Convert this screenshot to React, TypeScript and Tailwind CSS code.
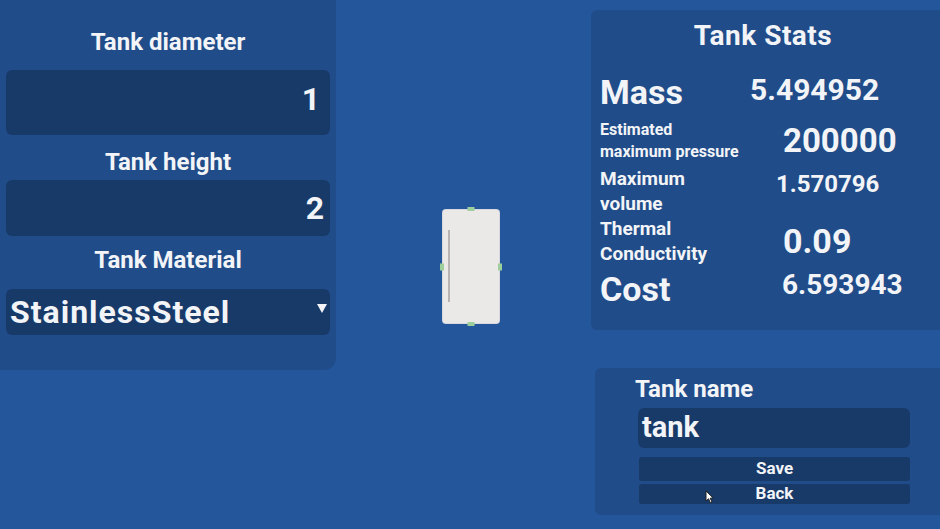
const font = { fontFamily: 'Roboto, "Noto Sans", sans-serif' };

type Stat = {
  label: string[];
  labelClass: string;
  value: string;
  valueClass: string;
  rowClass: string;
};

const stats: Stat[] = [
  { label: ['Mass'], labelClass: 'text-[34px] leading-[36px]', value: '5.494952', valueClass: 'ml-0 text-[30px] -mt-[6px]', rowClass: 'h-[48px]' },
  { label: ['Estimated', 'maximum pressure'], labelClass: 'text-[16px] leading-[22px]', value: '200000', valueClass: 'ml-[33px] text-[33px]', rowClass: 'h-[50px]' },
  { label: ['Maximum', 'volume'], labelClass: 'text-[19px] leading-[25px]', value: '1.570796', valueClass: 'ml-[26px] text-[24px] -mt-[14px]', rowClass: 'h-[50px]' },
  { label: ['Thermal', 'Conductivity'], labelClass: 'text-[19px] leading-[25px]', value: '0.09', valueClass: 'ml-[33px] text-[34px]', rowClass: 'h-[50px]' },
  { label: ['Cost'], labelClass: 'text-[34px] leading-[36px]', value: '6.593943', valueClass: 'ml-[32px] text-[28px] -mt-[8px]', rowClass: 'h-[46px]' },
];

function TankPreview() {
  return (
    <div className="relative w-[56px] h-[113px] rounded-[3px] bg-[#ebe8e8] shadow-[0_0_0_1px_#d8d8e0]">
      <div className="absolute left-[5px] top-[20px] w-[2px] h-[72px] bg-[#b9b3b3]" />
      {/* resize handles */}
      <div className="absolute left-1/2 -translate-x-1/2 -top-[3px] w-[7px] h-[4px] bg-[#9ccf9c]" />
      <div className="absolute left-1/2 -translate-x-1/2 -bottom-[3px] w-[7px] h-[4px] bg-[#9ccf9c]" />
      <div className="absolute top-1/2 -translate-y-1/2 -left-[3px] w-[4px] h-[7px] bg-[#9ccf9c]" />
      <div className="absolute top-1/2 -translate-y-1/2 -right-[3px] w-[4px] h-[7px] bg-[#9ccf9c]" />
    </div>
  );
}

export default function App() {
  return (
    <div
      className="relative flex w-[940px] h-[529px] overflow-hidden bg-[#24569c] text-[#f2f4f7] font-bold"
      style={font}
    >
      {/* Tank settings */}
      <div className="flex flex-col w-[336px] h-[370px] shrink-0 px-[6px] bg-[#204c89] rounded-br-[12px]">
        <div className="mt-[20px] h-[44px] flex items-center justify-center text-[24px]">Tank diameter</div>
        <div className="mt-[6px] h-[65px] rounded-[6px] bg-[#183a69] flex items-center justify-end pr-[10px] pb-[8px] text-[32px]">1</div>
        <div className="mt-[9px] h-[36px] flex items-center justify-center text-[24px]">Tank height</div>
        <div className="h-[56px] rounded-[6px] bg-[#183a69] flex items-center justify-end pr-[6px] text-[32px]">2</div>
        <div className="mt-[6px] h-[36px] flex items-center justify-center text-[24px]">Tank Material</div>
        <div className="mt-[11px] h-[46px] rounded-[6px] bg-[#183a69] flex items-center justify-between pl-[4px] pr-[3px]">
          <span className="text-[32px] tracking-[1px]">StainlessSteel</span>
          <svg className="-mt-[8px]" width="10" height="9" viewBox="0 0 10 9">
            <polygon points="0,0 10,0 5,9" fill="#f2f4f7" />
          </svg>
        </div>
      </div>

      {/* Preview */}
      <div className="flex-1 flex items-start justify-center pt-[210px] pl-[15px]">
        <TankPreview />
      </div>

      {/* Right column */}
      <div className="flex flex-col w-[349px] shrink-0 pt-[10px]">
        <div className="h-[320px] bg-[#204c89] rounded-tl-[6px] rounded-bl-[6px] pl-[9px] flex flex-col">
          <div className="h-[52px] flex items-center justify-center pr-[14px] text-[28px] tracking-[0.5px]">Tank Stats</div>
          <div className="flex flex-col mt-[6px]">
            {stats.map((s) => (
              <div key={s.value} className={`flex items-center ${s.rowClass}`}>
                <div className={`w-[150px] shrink-0 whitespace-nowrap ${s.labelClass}`}>
                  {s.label.map((l) => (
                    <div key={l}>{l}</div>
                  ))}
                </div>
                <div className={s.valueClass}>{s.value}</div>
              </div>
            ))}
          </div>
        </div>

        <div className="mt-[38px] ml-[4px] h-[147px] bg-[#204c89] rounded-tl-[6px] rounded-bl-[6px] pl-[40px] pr-[30px] flex flex-col">
          <div className="h-[40px] flex items-end pb-[1px] text-[24px]">Tank name</div>
          <div className="ml-[3px] h-[40px] rounded-[6px] bg-[#183a69] flex items-center px-[4px] text-[29px]">tank</div>
          <div className="mt-[9px] ml-[4px] h-[24px] rounded-[3px] bg-[#183a69] flex items-center justify-center text-[17px]">Save</div>
          <div className="mt-[3px] ml-[4px] h-[20px] rounded-[3px] bg-[#183a69] flex items-center justify-center text-[17px]">Back</div>
        </div>
      </div>

      {/* Mouse pointer */}
      <svg className="absolute left-[705px] top-[490px]" width="9" height="14" viewBox="0 0 9 14">
        <path d="M1 1 L1 11 L3.5 8.8 L5.4 12.8 L7 12 L5.2 8.2 L8.2 8 Z" fill="#fff" stroke="#222" strokeWidth="1" />
      </svg>
    </div>
  );
}
